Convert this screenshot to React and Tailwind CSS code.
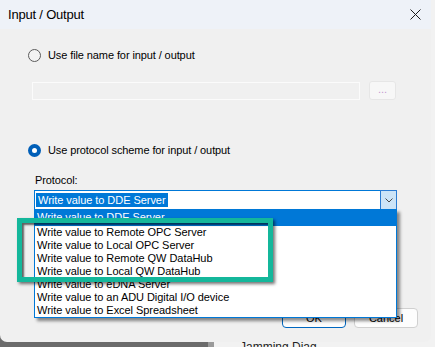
import React from 'react';

const items = [
  'Write value to DDE Server',
  'Write value to Remote OPC Server',
  'Write value to Local OPC Server',
  'Write value to Remote QW DataHub',
  'Write value to Local QW DataHub',
  'Write value to eDNA Server',
  'Write value to an ADU Digital I/O device',
  'Write value to Excel Spreadsheet',
];

const font = { fontFamily: '"Liberation Sans", Arial, sans-serif' };

const Radio = ({ checked, label }) => (
  <div className="flex items-center h-[13px]">
    {checked ? (
      <span className="w-[13px] h-[13px] rounded-full bg-[#005fb8] flex items-center justify-center">
        <span className="w-[5px] h-[5px] rounded-full bg-white" />
      </span>
    ) : (
      <span className="w-[13px] h-[13px] rounded-full border border-[#5b5b5b] bg-[#f3f3f3]" />
    )}
    <span className="ml-[7px] text-[11px] tracking-[-0.1px] text-black leading-none">{label}</span>
  </div>
);

export default function App() {
  return (
    <div
      className="w-[435px] h-[347px] overflow-hidden flex flex-col bg-[linear-gradient(to_right,#6b6b6b_208px,#9a9a9a_208px,#9a9a9a_214px,#f2f2f2_214px)]"
      style={font}
    >
      <div className="w-[431px] h-[342px] shrink-0 bg-[#f0f0f0] rounded-b-[7px] flex flex-col">
        {/* title bar */}
        <div className="h-[29px] bg-[#eef2f8] flex items-center justify-between pl-[8px] pr-[10px]">
          <span className="text-[13px] text-black tracking-[-0.2px]">Input / Output</span>
          <svg width="11" height="11" viewBox="0 0 11 11">
            <path d="M0.5 0.5 L10.5 10.5 M10.5 0.5 L0.5 10.5" stroke="#1c1c1c" strokeWidth="1" />
          </svg>
        </div>

        <div className="relative flex-1 flex flex-col pl-[28px] pr-[13px]">
          <div className="mt-[20px]">
            <Radio label="Use file name for input / output" />
          </div>

          <div className="mt-[19px] ml-[4px] flex items-center gap-[9px]">
            <div className="w-[328px] h-[18px] border border-[#fbfbfb] bg-[#f0f0f0]" />
            <div className="w-[27px] h-[19px] rounded-[3px] border border-[#e6e6e6] bg-[#f7f7f7] flex items-end justify-center pb-[4px] text-[11px] text-[#c49ad0] leading-none">
              ...
            </div>
          </div>

          <div className="mt-[44px]">
            <Radio checked label="Use protocol scheme for input / output" />
          </div>

          <div className="mt-[17px] ml-[7px] h-[12px] flex items-center text-[11px] tracking-[-0.1px] text-black">
            Protocol:
          </div>

          {/* combobox */}
          <div className="mt-[4px] ml-[6px] w-[363px] h-[20px] relative border border-[#0078d7] bg-white flex items-center">
            <span className="ml-[1px] h-[14px] px-[2px] bg-[#0078d7] text-white text-[11px] tracking-[-0.05px] leading-[14px]">
              Write value to DDE Server
            </span>
            <div className="ml-auto w-[17px] h-[20px] -mr-[1px] border border-[#2b7cd3] bg-[#cce4f7] flex items-center justify-center">
              <svg width="8" height="5" viewBox="0 0 8 5">
                <path d="M0.5 0.5 L4 4 L7.5 0.5" fill="none" stroke="#4a4a4a" strokeWidth="1" />
              </svg>
            </div>

            {/* dropdown list */}
            <div className="absolute left-[-1px] top-[18px] w-[363px] border border-[#0078d7] bg-white shadow-[3px_3px_3px_rgba(0,0,0,0.45)] z-10">
              {items.map((t, i) => (
                <div
                  key={t}
                  className={`pl-[2px] text-[11px] tracking-[-0.05px] leading-[13px] ${
                    i === 0 ? 'h-[16px] pt-[1px] bg-[#0078d7] text-white' : 'h-[13px] text-black'
                  }`}
                >
                  {t}
                </div>
              ))}
            </div>
          </div>

          {/* buttons */}
          <div className="mt-auto mb-[14px] flex justify-end gap-[8px]">
            <div className="w-[64px] h-[20px] rounded-[4px] border border-[#0067c0] bg-[#fdfdfd] flex items-center justify-center text-[11px] text-black">
              OK
            </div>
            <div className="w-[64px] h-[20px] rounded-[4px] border border-[#d0d0d0] bg-[#fdfdfd] flex items-center justify-center text-[11px] text-black">
              Cancel
            </div>
          </div>

          {/* highlight annotation */}
          <div className="absolute left-[17px] top-[189px] w-[256px] h-[64px] border-[5px] border-[#14b79b] z-20 shadow-[2px_2px_3px_rgba(0,0,0,0.55),inset_2px_2px_2px_rgba(0,0,0,0.6)]" />
        </div>
      </div>
      <div className="h-[5px] overflow-hidden pl-[240px]">
        <div className="text-[12px] text-[#222] leading-[12px] -mt-[1px]">Jamming Diag</div>
      </div>
    </div>
  );
}
